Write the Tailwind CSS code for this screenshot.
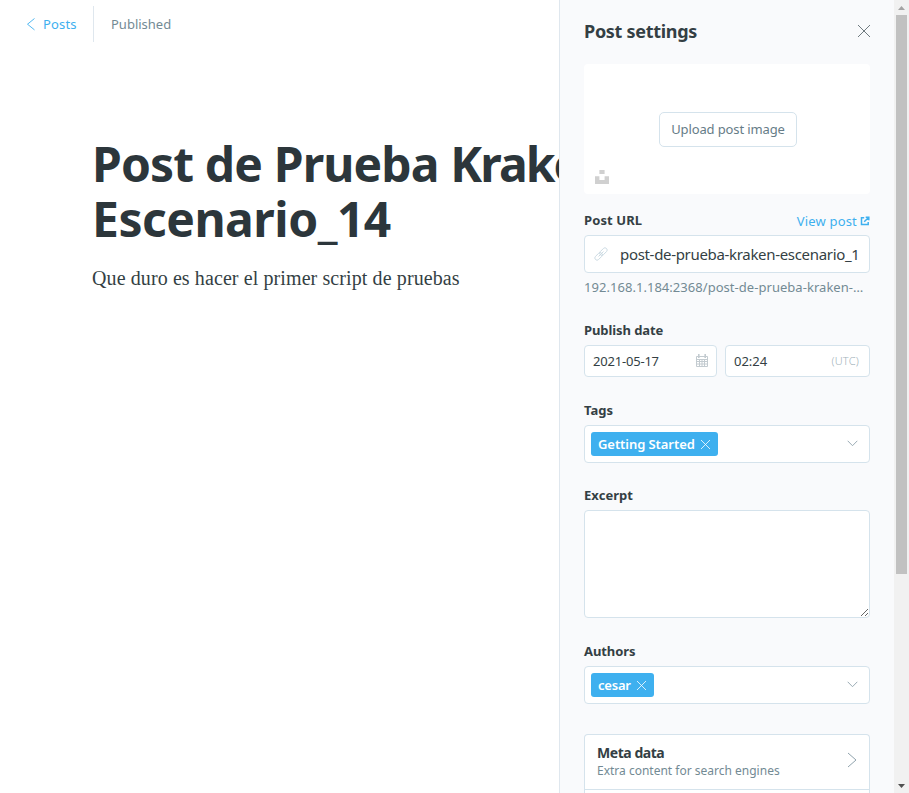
<!DOCTYPE html>
<html lang="es">
<head>
<meta charset="utf-8">
<title>Post settings</title>
<script src="https://cdn.jsdelivr.net/npm/@tailwindcss/browser@4"></script>
</head>
<body class="h-[793px] w-[909px] overflow-hidden bg-white font-['Noto_Sans',sans-serif] text-[13px] leading-5 text-[#343f44]">
<div class="flex h-full">
  <main class="h-full w-[559px] shrink-0 overflow-hidden">
    <header class="flex h-12 items-center pl-[26px]">
      <svg class="mr-2 h-[14px] w-[9px]" viewBox="0 0 9 14" fill="none" stroke="#3eb0ef" stroke-width=".9"><path d="M8.5 1.5 1.5 7.2l7 5.7"/></svg>
      <span class="w-[34px] pb-px tracking-[0.15px] text-[#3eb0ef]">Posts</span>
      <div class="ml-4 mr-[17px] h-9 w-px bg-[#dfe7ee]"></div>
      <span class="pb-px text-[#738a94]">Published</span>
    </header>
    <article class="w-[720px] pl-[92px] pt-[88px]">
      <h1 class="whitespace-nowrap text-[48px] font-bold leading-[55px] text-[#2c363b]"><span class="tracking-[-0.87px]">Post de Prueba <span class="tracking-[-1.9px]">Kraken</span></span><br><span class="tracking-[-0.5px]">Escenario_14</span></h1>
      <p class="mt-[16px] font-['Liberation_Serif',serif] text-[20px] leading-[32px] tracking-[0.1px]">Que duro es hacer el primer script de pruebas</p>
    </article>
  </main>

  <aside class="flex h-full w-[335px] shrink-0 flex-col overflow-hidden border-l border-[#dfe7ee] bg-[#f9fafc] px-6">
    <div class="flex h-16 shrink-0 items-center justify-between pb-0.5">
      <h2 class="pb-px text-[18px] font-bold tracking-[-0.3px]">Post settings</h2>
      <svg class="-mr-px mb-px h-[14px] w-[14px]" viewBox="0 0 14 14" stroke="#5f6b70" stroke-width=".9"><path d="M1 1l12 12M13 1 1 13"/></svg>
    </div>

    <div class="relative flex h-[130px] shrink-0 items-center justify-center rounded-[4px] bg-white">
      <button class="ml-0.5 h-[35px] w-[138px] whitespace-nowrap rounded-[5px] border border-[#d5e3ec] tracking-[-0.12px] text-[#667c87]">Upload post image</button>
      <svg class="absolute bottom-[10px] left-[11px] h-[14px] w-[14px]" viewBox="0 0 14 14" fill="#d0d0d0"><path d="M4.4 0h5.2v4H4.4zM0 6.2h4.4v3.9h5.2V6.2H14V14H0z"/></svg>
    </div>

    <div class="mt-4 flex h-5 shrink-0 items-center justify-between">
      <label class="pb-px font-bold tracking-[0.1px]">Post URL</label>
      <a class="flex items-center pt-px tracking-[0.18px] text-[#3eb0ef]">View post
        <svg class="ml-[3px] h-[10px] w-[10px]" viewBox="0 0 10 10" fill="none" stroke="#3eb0ef" stroke-width="1.5"><path d="M4.2 1.8H1.5v6.7h6.7V6M4.2 5.8 8.3 1.7M5.7 1.2h3.1v3.1"/></svg>
      </a>
    </div>
    <div class="mt-[5px] flex h-[38px] shrink-0 items-center rounded-[4px] border border-[#d5e3ec] bg-white pl-[9px]">
      <svg class="mr-[12px] h-[14px] w-[14px]" viewBox="0 0 14 14" fill="none" stroke="#c9d9e2" stroke-width=".9"><g transform="rotate(-45 7 7)"><rect x="-.8" y="4.8" width="8.8" height="4.4" rx="2.2"/><rect x="6" y="4.8" width="8.8" height="4.4" rx="2.2"/><path d="M3.5 7h7"/></g></svg>
      <span class="whitespace-nowrap text-[15px] tracking-[-0.32px]">post-de-prueba-kraken-escenario_1</span>
    </div>
    <p class="mt-1 shrink-0 whitespace-nowrap tracking-[0.04px] text-[#738a94]">192.168.1.184:2368/post-de-prueba-kraken-…</p>

    <label class="mt-[23px] shrink-0 font-bold tracking-[-0.08px]">Publish date</label>
    <div class="mt-[5px] flex shrink-0 gap-2">
      <div class="flex h-8 w-[133px] items-center justify-between rounded-[4px] border border-[#d5e3ec] bg-white pl-2 pr-2">
        <span class="tracking-[-0.2px]">2021-05-17</span>
        <svg class="h-[14px] w-[12px]" viewBox="0 0 12 14" fill="none" stroke="#c3cbd0" stroke-width="1"><path d="M.5 2.5h11v10H.5zM.5 5.5h11M.5 7.5h11M.5 10h11M3.5 5v8M6 5v8M8.5 5v8"/><path stroke-width="1.6" d="M2.8 0v4M9.2 0v4"/></svg>
      </div>
      <div class="flex h-8 flex-1 items-center justify-between rounded-[4px] border border-[#d5e3ec] bg-white pl-2 pr-[10px]">
        <span>02:24</span><span class="text-[11px] font-light tracking-[0.2px] text-[#a3b3bb]">(UTC)</span>
      </div>
    </div>

    <label class="mt-[23px] shrink-0 font-bold">Tags</label>
    <div class="mt-[5px] flex h-[38px] shrink-0 items-center justify-between rounded-[4px] border border-[#d5e3ec] bg-white pl-1.5 pr-[11px]">
      <div class="flex h-6 w-[127px] items-center justify-between rounded-[3px] bg-[#3eb0ef] px-[7px] font-semibold tracking-[-0.07px] text-white">
        <span class="whitespace-nowrap">Getting Started</span>
        <svg class="h-[11px] w-[11px]" viewBox="0 0 11 11" stroke="#fff" stroke-width=".8"><path d="M1 1l9 9M10 1 1 10"/></svg>
      </div>
      <svg class="mb-px h-[7px] w-[11px]" viewBox="0 0 11 7" fill="none" stroke="#90a3ad" stroke-width=".9"><path d="M.7.8l4.8 4.9L10.3.8"/></svg>
    </div>

    <label class="mt-[22px] shrink-0 font-bold tracking-[0.05px]">Excerpt</label>
    <textarea class="mt-[5px] block h-[108px] w-full shrink-0 resize-y rounded-[4px] border border-[#d5e3ec] bg-white"></textarea>

    <label class="mt-[23px] shrink-0 font-bold tracking-[-0.08px]">Authors</label>
    <div class="mt-[5px] flex h-[38px] shrink-0 items-center justify-between rounded-[4px] border border-[#d5e3ec] bg-white pl-1.5 pr-[11px]">
      <div class="flex h-6 w-[63px] items-center justify-between rounded-[3px] bg-[#3eb0ef] px-[7px] font-semibold tracking-[-0.2px] text-white">
        <span>cesar</span>
        <svg class="h-[11px] w-[11px]" viewBox="0 0 11 11" stroke="#fff" stroke-width=".8"><path d="M1 1l9 9M10 1 1 10"/></svg>
      </div>
      <svg class="mb-px h-[7px] w-[11px]" viewBox="0 0 11 7" fill="none" stroke="#90a3ad" stroke-width=".9"><path d="M.7.8l4.8 4.9L10.3.8"/></svg>
    </div>

    <div class="mt-[30px] shrink-0 rounded-t-[4px] border border-b-0 border-[#d5e3ec] bg-white">
      <div class="flex h-[55px] items-center justify-between border-b border-[#d5e3ec] pl-3 pr-3">
        <div class="pb-px">
          <div class="text-[14px] font-bold leading-[18px] tracking-[-0.45px]">Meta data</div>
          <div class="text-[12px] leading-[17px] text-[#738a94]">Extra content for search engines</div>
        </div>
        <svg class="mt-[-5px] h-[16px] w-[10px]" viewBox="0 0 10 16" fill="none" stroke="#90a3ad"><path d="M1 1l8 7-8 7"/></svg>
      </div>
      <div class="h-14"></div>
    </div>
  </aside>

  <div class="flex h-full w-[15px] shrink-0 flex-col items-center bg-[#f1f1f1]">
    <div class="flex h-[15px] shrink-0 items-center"><svg class="h-1 w-[7px]" viewBox="0 0 7 4" fill="#a3a3a3"><path d="M0 4h7L3.5 0z"/></svg></div>
    <div class="h-[559px] w-[11px] bg-[#c1c1c1]"></div>
    <div class="mt-auto flex h-[15px] items-center"><svg class="h-1 w-[7px]" viewBox="0 0 7 4" fill="#505050"><path d="M0 0h7L3.5 4z"/></svg></div>
  </div>
</div>
</body>
</html>
